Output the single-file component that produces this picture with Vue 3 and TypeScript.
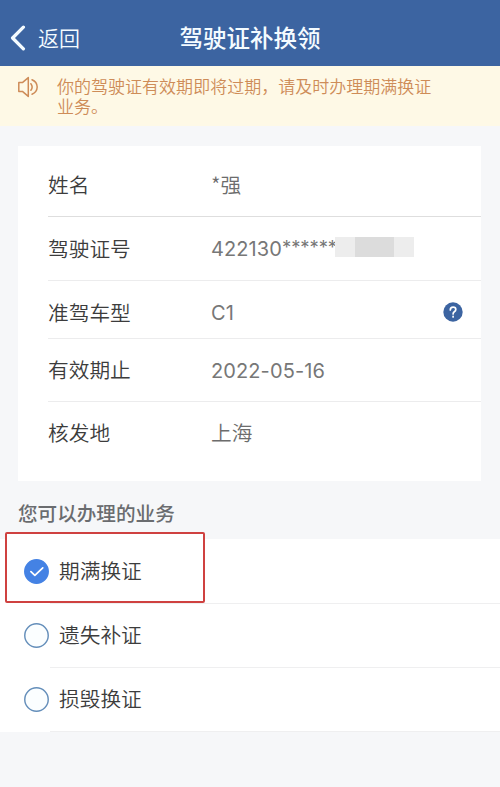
<script setup lang="ts">
import { ref } from 'vue'

interface Field {
  key: string
  label: string
  value: string
}

const fields: Field[] = [
  { key: 'name', label: '姓名', value: '*强' },
  { key: 'number', label: '驾驶证号', value: '422130' },
  { key: 'type', label: '准驾车型', value: 'C1' },
  { key: 'expiry', label: '有效期止', value: '2022-05-16' },
  { key: 'place', label: '核发地', value: '上海' },
]

const services: string[] = ['期满换证', '遗失补证', '损毁换证']
const selected = ref(0)
</script>

<template>
  <div class="page">
    <header class="bar">
      <button class="back" type="button">
        <svg class="chevron" viewBox="0 0 16 26">
          <path d="M13.4 2.2 2.6 13 13.4 23.8" />
        </svg>
        <span>返回</span>
      </button>
      <h1 class="title">驾驶证补换领</h1>
    </header>

    <div class="notice">
      <svg class="speaker" viewBox="0 0 22 22">
        <path d="M1.8 6.6H5.4L11.3 1.6V20.4L5.4 15.4H1.8Z" />
        <path d="M13.9 7.7Q16.4 11 13.9 14.3" />
        <path d="M15 3.8Q20 5.9 20.2 11Q20 16.1 15 18.2" />
      </svg>
      <p class="notice-text">你的驾驶证有效期即将过期，请及时办理期满换证业务。</p>
    </div>

    <section class="card">
      <div v-for="f in fields" :key="f.key" class="field" :class="f.key">
        <span class="label">{{ f.label }}</span>
        <span class="value">{{ f.value }}</span>
        <template v-if="f.key === 'number'">
          <span class="stars">******</span>
          <span class="mask"><i /><i /><i /></span>
        </template>
        <svg v-if="f.key === 'type'" class="help" viewBox="0 0 20 20">
          <circle cx="10" cy="10" r="9.7" />
          <path d="M7.3 7.9Q7.3 5.2 10.1 5.2Q12.8 5.2 12.8 7.5Q12.8 8.8 11.3 9.8Q10.1 10.6 10.1 12" />
          <path d="M10.1 14.3V14.9" />
        </svg>
      </div>
    </section>

    <h2 class="heading">您可以办理的业务</h2>

    <section class="services">
      <div v-for="(s, i) in services" :key="s" class="service" @click="selected = i">
        <svg class="radio" :class="{ on: selected === i }" viewBox="0 0 26 26">
          <circle cx="13" cy="13" r="12.2" />
          <path v-if="selected === i" d="M7.2 13.2 11.3 17.1 19.5 9.3" />
        </svg>
        <span class="service-name">{{ s }}</span>
      </div>
      <div class="highlight" />
    </section>
  </div>
</template>

<style>
body {
  margin: 0;
  background: #f6f7f9;
}
</style>

<style scoped>
.page {
  width: 500px;
  height: 787px;
  overflow: hidden;
  background: #f6f7f9;
  font-family: Inter, "Noto Sans CJK SC", sans-serif;
  color: #3c3c3c;
}
.bar {
  box-sizing: border-box;
  height: 66px;
  padding-top: 9px;
  display: grid;
  grid-template-columns: 100px 1fr 100px;
  align-items: center;
  background: #3c64a1;
  color: #f4fbff;
}
.back {
  display: flex;
  align-items: center;
  gap: 12px;
  padding: 0 0 0 10px;
  border: 0;
  background: none;
  color: inherit;
  font: 350 21px/30px "Noto Sans CJK SC", sans-serif;
}
.back span {
  margin-top: -2px;
}
.chevron {
  width: 16px;
  height: 26px;
  fill: none;
  stroke: currentColor;
  stroke-width: 3.3;
  stroke-linecap: round;
  stroke-linejoin: round;
}
.title {
  margin: -2px 0 0;
  text-align: center;
  font: 500 23.5px/30px "Noto Sans CJK SC", sans-serif;
  white-space: nowrap;
}
.notice {
  box-sizing: border-box;
  height: 60px;
  padding: 10px 0 0 17px;
  display: flex;
  gap: 18px;
  background: #fef9e6;
  color: #ce8c58;
}
.speaker {
  width: 22px;
  height: 22px;
  flex: none;
  fill: none;
  stroke: currentColor;
  stroke-width: 1.5;
  stroke-linejoin: round;
  stroke-linecap: round;
}
.notice-text {
  margin: 0;
  width: 380px;
  font: 350 17.02px/20px "Noto Sans CJK SC", sans-serif;
}
.card {
  box-sizing: border-box;
  width: 463px;
  height: 335px;
  margin: 20px 0 0 18px;
  padding-left: 30px;
  background: #fff;
}
.field {
  box-sizing: border-box;
  display: flex;
  align-items: center;
  border-bottom: 1px solid #ececed;
}
.name { height: 71px; padding-top: 9px; border-color: #dedede; }
.number { height: 64px; padding-top: 2px; }
.type { height: 58px; padding-top: 8px; }
.expiry { height: 63px; padding-top: 2px; }
.place { height: 64px; border-bottom: 0; }
.label {
  width: 163px;
  font-size: 20.7px;
  font-weight: 350;
  line-height: 30px;
}
.value {
  color: #777;
  font-size: 20px;
  line-height: 30px;
  letter-spacing: 0.1px;
}
.number .value, .type .value {
  margin-top: -2px;
}
.name .value, .place .value {
  margin-top: -4px;
  color: #6c6c6c;
  font: 350 20.7px/30px "Noto Sans CJK SC", sans-serif;
}
.stars {
  margin-top: -5px;
  color: #777;
  font-size: 18.5px;
  letter-spacing: -0.1px;
}
.mask {
  display: flex;
  height: 20px;
  margin: -6px auto 0 -2px;
}
.mask i { width: 20px; background: #ededed; }
.mask i:nth-child(2) { width: 39px; background: #dcdcdc; }
.help {
  width: 20px;
  height: 20px;
  margin: -4px 18px 0 auto;
}
.help circle { fill: #3c64a1; }
.help path {
  fill: none;
  stroke: #fff;
  stroke-width: 1.7;
  stroke-linecap: round;
}
.heading {
  margin: 0;
  height: 58px;
  padding-left: 18px;
  font: 500 19.6px/63px "Noto Sans CJK SC", sans-serif;
  color: #6a6c6f;
}
.services {
  position: relative;
  box-sizing: border-box;
  height: 193px;
  padding-top: 1px;
  background: #fff;
}
.service {
  height: 64px;
  padding-left: 24px;
  display: flex;
  align-items: center;
  gap: 10px;
  background: linear-gradient(#efeff0, #efeff0) 50px 100% / 450px 1px no-repeat;
}
.radio {
  width: 25px;
  height: 25px;
  margin-top: -2px;
  fill: #fbfeff;
  stroke: #648eba;
  stroke-width: 1.5;
}
.radio.on circle {
  fill: #4482e4;
  stroke: #4482e4;
}
.radio.on path {
  fill: none;
  stroke: #fff;
  stroke-width: 1.8;
  stroke-linecap: round;
  stroke-linejoin: round;
}
.service-name {
  font-size: 20.7px;
  font-weight: 350;
  line-height: 30px;
}
.highlight {
  position: absolute;
  box-sizing: border-box;
  left: 5px;
  top: -7px;
  width: 200px;
  height: 71px;
  border: 2px solid #cf4140;
  border-radius: 2px;
  background: linear-gradient(#fff, #fff) 0 0 / 100% 6px no-repeat;
  pointer-events: none;
}
</style>
